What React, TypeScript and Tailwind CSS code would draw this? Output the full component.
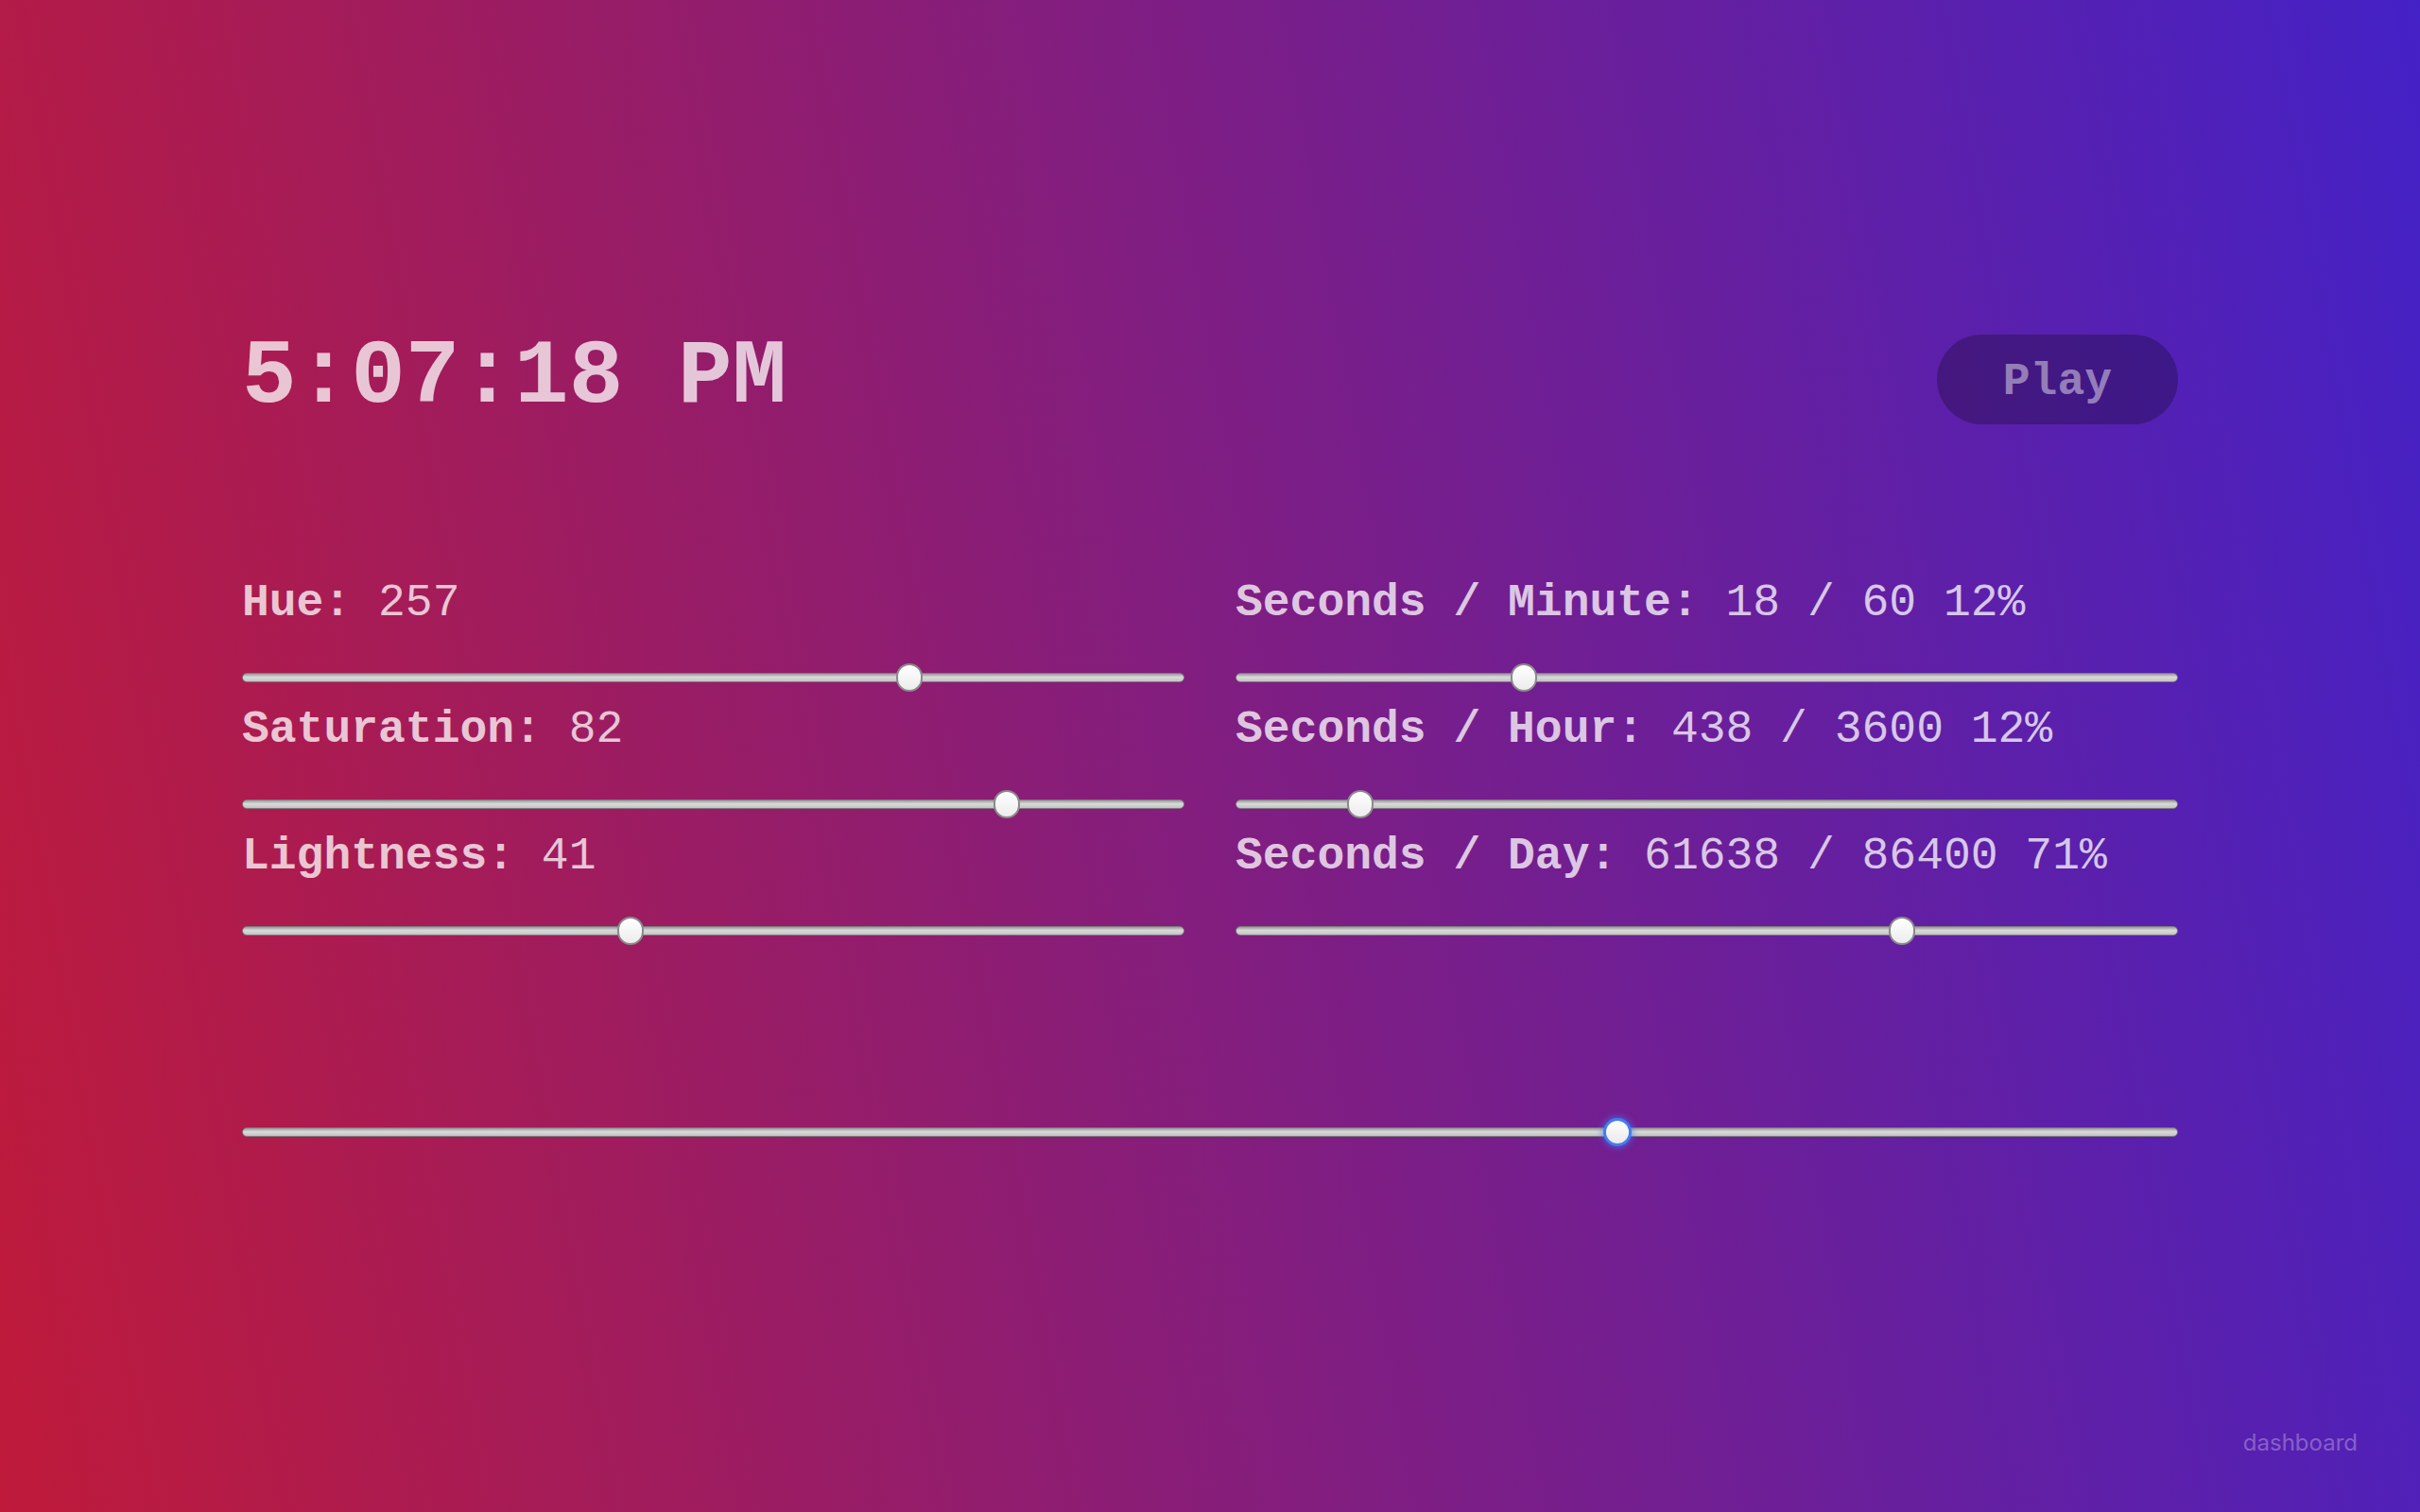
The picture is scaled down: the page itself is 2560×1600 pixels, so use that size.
const mono = "font-['Courier_New','Nimbus_Mono_PS','Liberation_Mono',monospace]";

type RowProps = {
  label: string;
  value: string;
  fraction: number;
};

const Slider = ({ fraction, focused }: { fraction: number; focused?: boolean }) => {
  return (
    <div className="relative flex h-[28px] w-full items-center">
      <div className="h-[10px] w-full rounded-full border border-[#7c7c7c] bg-[linear-gradient(to_bottom,#9a9a9a,#dadada_45%,#c3c3c3)]" />
      {focused ? (
        <div
          className="absolute top-[2px] h-[24px] w-[24px] rounded-full bg-[linear-gradient(to_bottom,#ffffff,#e9e9e9)] shadow-[0_0_0_3px_#3f7ef2,0_0_6px_5px_rgba(70,120,240,0.55)]"
          style={{ left: `calc((100% - 28px) * ${fraction} + 2px)` }}
        />
      ) : (
        <div
          className="absolute top-[-1px] h-[30px] w-[28px] rounded-full border-2 border-[#8a8a8a] bg-[linear-gradient(to_bottom,#ffffff,#ececec)]"
          style={{ left: `calc((100% - 28px) * ${fraction})` }}
        />
      )}
    </div>
  );
};

const Row = ({ label, value, fraction }: RowProps) => {
  return (
    <div className="flex flex-col gap-[41px]">
      <div className={`${mono} text-[48px] leading-[48px] text-white/75 whitespace-pre`}>
        <span className="font-bold">{label}</span> {value}
      </div>
      <Slider fraction={fraction} />
    </div>
  );
};

const left: RowProps[] = [
  { label: "Hue:", value: "257", fraction: 257 / 360 },
  { label: "Saturation:", value: "82", fraction: 0.82 },
  { label: "Lightness:", value: "41", fraction: 0.41 },
];

const right: RowProps[] = [
  { label: "Seconds / Minute:", value: "18 / 60 12%", fraction: 18 / 60 },
  { label: "Seconds / Hour:", value: "438 / 3600 12%", fraction: 438 / 3600 },
  { label: "Seconds / Day:", value: "61638 / 86400 71%", fraction: 61638 / 86400 },
];

export default function App() {
  return (
    <div className="relative min-h-screen w-full bg-[linear-gradient(80deg,#bf1a3a,#4421c6)]">
      <div className="mx-auto flex w-[2048px] flex-col pt-[354px]">
        <div className="flex h-[95px] items-center justify-between">
          <div className={`${mono} text-[96px] font-bold leading-none text-white/75 -mt-[4px]`}>5:07:18 PM</div>
          <button className={`${mono} h-[95px] rounded-full bg-black/25 px-[70px] pt-[4px] text-[48px] font-bold leading-none text-white/45`}>
            Play
          </button>
        </div>

        <div className="mt-[165px] grid grid-cols-2 gap-x-[54px]">
          <div className="flex flex-col gap-[17px]">
            {left.map((r) => (
              <Row key={r.label} {...r} />
            ))}
          </div>
          <div className="flex flex-col gap-[17px]">
            {right.map((r) => (
              <Row key={r.label} {...r} />
            ))}
          </div>
        </div>

        <div className="mt-[185px]">
          <Slider fraction={61638 / 86400} focused />
        </div>
      </div>

      <div className="absolute bottom-[55px] right-[66px] font-['Inter','Noto_Sans',sans-serif] text-[24px] text-white/30">
        dashboard
      </div>
    </div>
  );
}
